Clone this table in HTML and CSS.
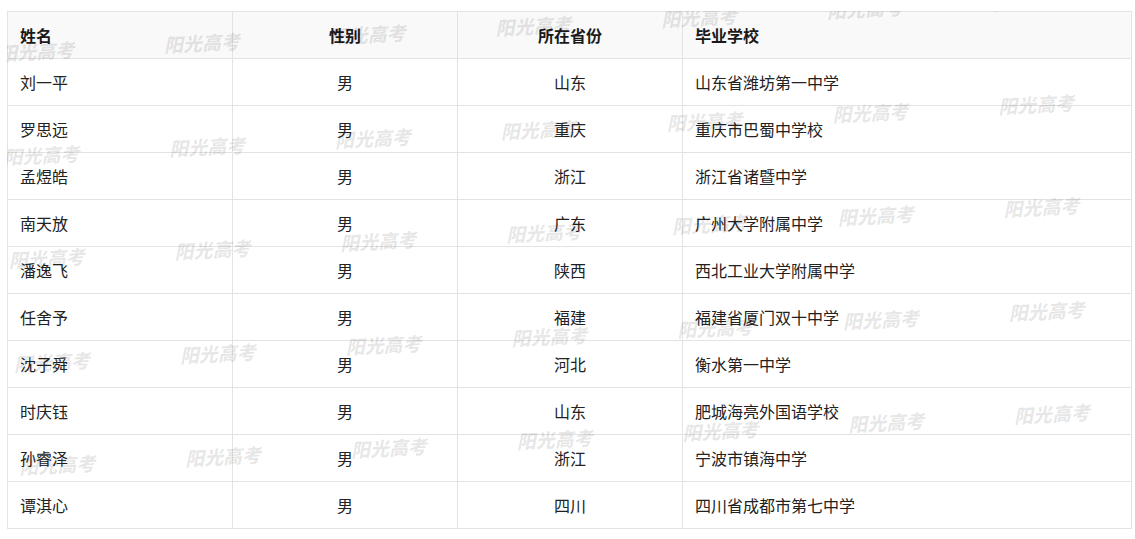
FILE: index.html
```html
<!DOCTYPE html>
<html lang="zh-CN">
<head>
<meta charset="utf-8">
<title>名单</title>
<link rel="stylesheet" href="styles.css">
</head>
<body>
<div class="page">
  <div class="sheet">
    <table class="roster">
      <colgroup>
        <col class="c-name"><col class="c-sex"><col class="c-prov"><col class="c-school">
      </colgroup>
      <thead>
        <tr><th class="left">姓名</th><th>性别</th><th>所在省份</th><th class="left">毕业学校</th></tr>
      </thead>
      <tbody>
        <tr><td class="left">刘一平</td><td>男</td><td>山东</td><td class="left">山东省潍坊第一中学</td></tr>
        <tr><td class="left">罗思远</td><td>男</td><td>重庆</td><td class="left">重庆市巴蜀中学校</td></tr>
        <tr><td class="left">孟煜皓</td><td>男</td><td>浙江</td><td class="left">浙江省诸暨中学</td></tr>
        <tr><td class="left">南天放</td><td>男</td><td>广东</td><td class="left">广州大学附属中学</td></tr>
        <tr><td class="left">潘逸飞</td><td>男</td><td>陕西</td><td class="left">西北工业大学附属中学</td></tr>
        <tr><td class="left">任舍予</td><td>男</td><td>福建</td><td class="left">福建省厦门双十中学</td></tr>
        <tr><td class="left">沈子舜</td><td>男</td><td>河北</td><td class="left">衡水第一中学</td></tr>
        <tr><td class="left">时庆钰</td><td>男</td><td>山东</td><td class="left">肥城海亮外国语学校</td></tr>
        <tr><td class="left">孙睿泽</td><td>男</td><td>浙江</td><td class="left">宁波市镇海中学</td></tr>
        <tr><td class="left">谭淇心</td><td>男</td><td>四川</td><td class="left">四川省成都市第七中学</td></tr>
      </tbody>
    </table>
    <div class="watermarks" aria-hidden="true">
      <span>阳光高考</span><span>阳光高考</span><span>阳光高考</span><span>阳光高考</span><span>阳光高考</span><span>阳光高考</span><span>阳光高考</span>
      <span>阳光高考</span><span>阳光高考</span><span>阳光高考</span><span>阳光高考</span><span>阳光高考</span><span>阳光高考</span><span>阳光高考</span>
      <span>阳光高考</span><span>阳光高考</span><span>阳光高考</span><span>阳光高考</span><span>阳光高考</span><span>阳光高考</span><span>阳光高考</span>
      <span>阳光高考</span><span>阳光高考</span><span>阳光高考</span><span>阳光高考</span><span>阳光高考</span><span>阳光高考</span><span>阳光高考</span>
      <span>阳光高考</span><span>阳光高考</span><span>阳光高考</span><span>阳光高考</span><span>阳光高考</span><span>阳光高考</span><span>阳光高考</span>
    </div>
  </div>
</div>
</body>
</html>
```
FILE: styles.css
```css
html, body {
  margin: 0;
  padding: 0;
  background: #ffffff;
}

.page {
  padding: 11px 0 0 7px;
  font-family: "Noto Sans CJK SC", "Noto Sans", sans-serif;
  font-size: 16px;
  color: #222222;
}

.sheet {
  position: relative;
  width: fit-content;
  overflow: hidden;
}

.roster {
  border-collapse: collapse;
  table-layout: fixed;
  width: 1125px;
}

.c-name, .c-sex, .c-prov {
  width: 225px;
}

.roster th,
.roster td {
  border: 1px solid #e3e3e3;
  height: 46px;
  padding: 0 12px;
  text-align: center;
  vertical-align: middle;
  line-height: 20px;
  white-space: nowrap;
}

.roster th {
  background: #f9f9f9;
  font-weight: 700;
  color: #1a1a1a;
}

.roster .left {
  text-align: left;
}

.watermarks {
  position: absolute;
  left: -54px;
  top: -12.25px;
  display: grid;
  grid-template-columns: repeat(7, 166px);
  grid-auto-rows: 103.5px;
  transform-origin: 83px 51.75px;
  transform: rotate(-2.93deg);
  pointer-events: none;
}

.watermarks span {
  display: flex;
  align-items: center;
  justify-content: center;
  font-family: "Liberation Serif", "Noto Sans CJK SC", serif;
  font-size: 19px;
  font-weight: 900;
  font-style: italic;
  color: rgba(0, 0, 0, 0.095);
  white-space: nowrap;
}
```
